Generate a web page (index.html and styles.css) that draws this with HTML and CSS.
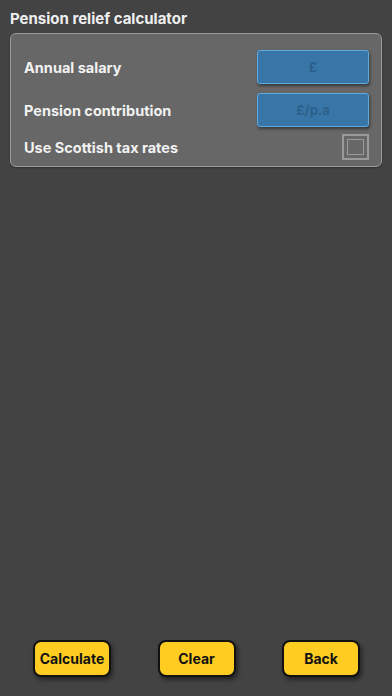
FILE: index.html
```html
<!DOCTYPE html>
<html>
<head>
<meta charset="utf-8">
<link rel="stylesheet" href="styles.css">
</head>
<body>
<div class="screen">
  <h1 class="title">Pension relief calculator</h1>
  <div class="panel">
    <div class="row">
      <span class="label">Annual salary</span>
      <div class="field">£</div>
    </div>
    <div class="row">
      <span class="label">Pension contribution</span>
      <div class="field">£/p.a</div>
    </div>
    <div class="row row-check">
      <span class="label">Use Scottish tax rates</span>
      <div class="check"><div class="check-inner"></div></div>
    </div>
  </div>
  <div class="spacer"></div>
  <div class="buttons">
    <div class="btn">Calculate</div>
    <div class="btn">Clear</div>
    <div class="btn">Back</div>
  </div>
</div>
</body>
</html>
```
FILE: styles.css
```css
html, body {
  margin: 0;
  padding: 0;
  background: #434343;
}
.screen {
  width: 392px;
  height: 696px;
  display: flex;
  flex-direction: column;
  font-family: Inter, "Open Sans", sans-serif;
  box-sizing: border-box;
}
.title {
  margin: 10px 0 0 10px;
  font-size: 15px;
  font-weight: 700;
  color: #efefef;
  line-height: 18px;
  height: 18px;
}
.panel {
  margin: 5px 10px 0 10px;
  background: #676767;
  border: 1.5px solid #9a9a9a;
  border-radius: 6px;
  padding: 16px 12px 6px 12px;
  display: flex;
  flex-direction: column;
  gap: 9px;
  box-shadow: 0 1px 2px rgba(0,0,0,0.3);
}
.row {
  display: flex;
  align-items: center;
  justify-content: space-between;
  padding-left: 1px;
}
.row-check {
  margin-top: -2px;
}
.label {
  font-size: 14.5px;
  font-weight: 700;
  color: #f2f2f2;
}
.field {
  width: 110px;
  height: 32px;
  background: #3776a7;
  border: 1.5px solid #5eaae2;
  border-radius: 3px;
  display: flex;
  align-items: center;
  justify-content: center;
  color: #2c5f8b;
  font-size: 13px;
  font-weight: 700;
  box-shadow: 1px 2px 3px rgba(0,0,0,0.45);
}
.check {
  width: 23px;
  height: 22px;
  border: 2px solid #9a9a9a;
  display: flex;
  align-items: center;
  justify-content: center;
}
.check-inner {
  width: 15px;
  height: 14px;
  border: 1.5px solid #9a9a9a;
}
.spacer {
  flex: 1;
}
.buttons {
  display: flex;
  justify-content: space-between;
  padding: 0 32px 19px 33px;
}
.btn {
  width: 74px;
  height: 33px;
  background: #ffcd22;
  border: 2px solid #111;
  border-radius: 8px;
  display: flex;
  align-items: center;
  justify-content: center;
  font-size: 14px;
  font-weight: 700;
  color: #111;
  box-shadow: 2px 3px 4px rgba(0,0,0,0.45);
}
```
